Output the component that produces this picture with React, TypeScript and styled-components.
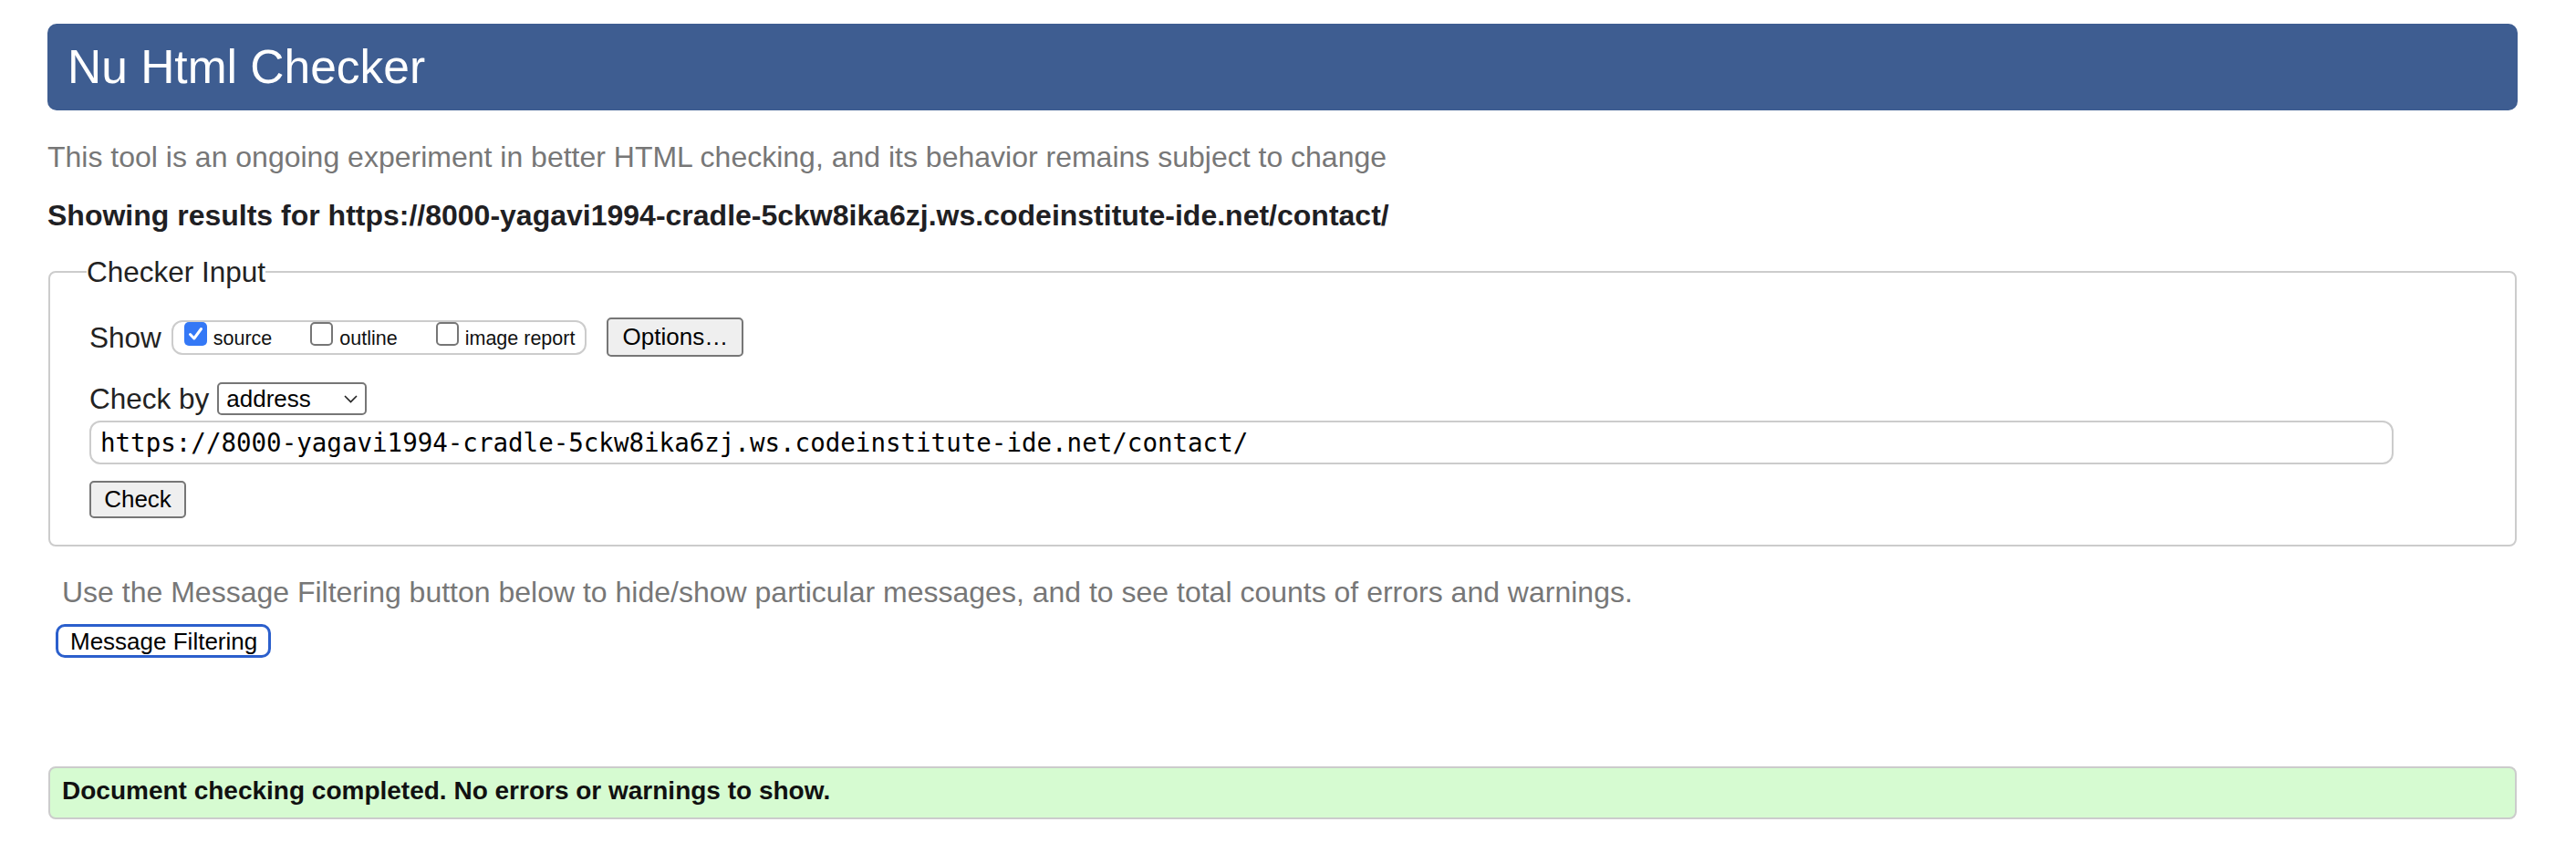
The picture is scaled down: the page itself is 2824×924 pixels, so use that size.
import React from "react";
import styled, { createGlobalStyle } from "styled-components";

const GlobalStyle = createGlobalStyle`
  html, body {
    margin: 0;
    padding: 0;
    background: #ffffff;
  }
  body {
    font-family: "Liberation Sans", Arial, Helvetica, sans-serif;
    color: #222222;
  }
`;

const Page = styled.div`
  width: 2708px;
  margin-left: 52px;
  padding-top: 26px;
  display: flex;
  flex-direction: column;
`;

const Header = styled.h1`
  margin: 0;
  height: 95px;
  box-sizing: border-box;
  padding-left: 22px;
  display: flex;
  align-items: center;
  background: #3e5d91;
  border-radius: 10px;
  color: #ffffff;
  font-size: 51.5px;
  font-weight: 400;
  line-height: 1;
`;

const Intro = styled.p`
  margin: 33px 0 0 0;
  padding-left: 0;
  font-size: 32px;
  line-height: 37px;
  color: #777777;
`;

const ResultsFor = styled.p`
  margin: 27px 0 0 0;
  padding-left: 0;
  font-size: 32px;
  line-height: 37px;
  font-weight: 700;
  color: #1f2023;
`;

const Fieldset = styled.fieldset`
  margin: 25px 1px 0 1px;
  padding: 32px 40px 29px 43px;
  border: 2px solid #cccccc;
  border-radius: 8px;
  min-width: 0;
  display: flex;
  flex-direction: column;
  align-items: flex-start;
`;

const Legend = styled.legend`
  padding: 0;
  margin-left: -3px;
  font-size: 31.5px;
  line-height: 36px;
  color: #222222;
`;

const Row = styled.div<{ $top?: number }>`
  display: flex;
  align-items: center;
  margin-top: ${(p) => p.$top ?? 0}px;
`;

const Label = styled.span<{ $gap: number }>`
  font-size: 31.5px;
  line-height: 36px;
  color: #222222;
  margin-right: ${(p) => p.$gap}px;
`;

const ShowGroup = styled.div`
  height: 38px;
  box-sizing: border-box;
  border: 2px solid #cccccc;
  border-radius: 12px;
  padding: 0 11px 0 12px;
  display: flex;
  align-items: flex-start;
  gap: 42px;
`;

const CheckItem = styled.label`
  display: flex;
  align-items: flex-start;
`;

const Box = styled.span<{ $checked?: boolean }>`
  width: 25px;
  height: 26px;
  box-sizing: border-box;
  border-radius: 5px;
  display: flex;
  align-items: center;
  justify-content: center;
  background: ${(p) => (p.$checked ? "#3478f6" : "#ffffff")};
  border: ${(p) => (p.$checked ? "none" : "2px solid #767676")};
`;

const CheckText = styled.span`
  margin-left: 7px;
  margin-top: 6px;
  font-size: 21.5px;
  line-height: 24px;
  color: #111111;
`;

const Button = styled.button<{ $w: number; $h: number }>`
  width: ${(p) => p.$w}px;
  height: ${(p) => p.$h}px;
  box-sizing: border-box;
  padding: 0;
  background: #efefef;
  border: 2px solid #767676;
  border-radius: 5px;
  font-family: "Liberation Sans", Arial, sans-serif;
  font-size: 26px;
  color: #000000;
  display: flex;
  align-items: center;
  justify-content: center;
`;

const OptionsButton = styled(Button)`
  margin-left: 22px;
`;

const Select = styled.div`
  width: 164px;
  height: 36px;
  box-sizing: border-box;
  border: 2px solid #767676;
  border-radius: 5px;
  padding: 0 8px 0 8px;
  display: flex;
  align-items: center;
  justify-content: space-between;
  font-size: 26px;
  color: #000000;
  background: #ffffff;
`;

const UrlInput = styled.input`
  width: 2526px;
  height: 48px;
  box-sizing: border-box;
  border: 2px solid #cccccc;
  border-radius: 12px;
  padding: 0 10px;
  font-family: "DejaVu Sans Mono", "Liberation Mono", monospace;
  font-size: 27.5px;
  color: #000000;
  background: #ffffff;
  outline: none;
`;

const Message = styled.p`
  margin: 32px 0 0 0;
  padding-left: 16px;
  font-size: 32px;
  line-height: 37px;
  color: #777777;
`;

const FilterButton = styled.button`
  align-self: flex-start;
  margin: 16px 0 0 9px;
  height: 37px;
  box-sizing: border-box;
  padding: 0 12px 0 13px;
  background: #ffffff;
  border: 3px solid #2b5fcc;
  border-radius: 10px;
  font-family: "Liberation Sans", Arial, sans-serif;
  font-size: 26px;
  line-height: 30px;
  color: #000000;
`;

const SuccessBar = styled.div`
  margin: 119px 1px 0 1px;
  height: 58px;
  box-sizing: border-box;
  padding: 9px 12px 0 13px;
  background: #d6fbd1;
  border: 2px solid #cccccc;
  border-radius: 8px;
  font-size: 28px;
  line-height: 32px;
  font-weight: 700;
  color: #111111;
`;

const CheckMark = () => (
  <svg width="17" height="16" viewBox="0 0 17 16">
    <path d="M2.5 8.5 L6.8 13 L14.5 2.5" fill="none" stroke="#ffffff" strokeWidth="3" strokeLinecap="round" strokeLinejoin="round" />
  </svg>
);

const Chevron = () => (
  <svg width="15" height="9" viewBox="0 0 15 9">
    <path d="M1 1 L7.5 7.5 L14 1" fill="none" stroke="#222222" strokeWidth="1.6" />
  </svg>
);

const url = "https://8000-yagavi1994-cradle-5ckw8ika6zj.ws.codeinstitute-ide.net/contact/";

const options = [
  { name: "source", checked: true },
  { name: "outline", checked: false },
  { name: "image report", checked: false },
];

export default function App() {
  return (
    <>
      <GlobalStyle />
      <Page>
        <Header>Nu Html Checker</Header>
        <Intro>
          This tool is an ongoing experiment in better HTML checking, and its behavior remains subject to change
        </Intro>
        <ResultsFor>Showing results for {url}</ResultsFor>
        <Fieldset>
          <Legend>Checker Input</Legend>
          <Row>
            <Label $gap={11}>Show</Label>
            <ShowGroup>
              {options.map((o) => (
                <CheckItem key={o.name}>
                  <Box $checked={o.checked}>{o.checked && <CheckMark />}</Box>
                  <CheckText>{o.name}</CheckText>
                </CheckItem>
              ))}
            </ShowGroup>
            <OptionsButton $w={150} $h={43}>Options…</OptionsButton>
          </Row>
          <Row $top={28}>
            <Label $gap={9}>Check by</Label>
            <Select>
              <span>address</span>
              <Chevron />
            </Select>
          </Row>
          <Row $top={6}>
            <UrlInput readOnly value={url} />
          </Row>
          <Row $top={18}>
            <Button $w={106} $h={41}>Check</Button>
          </Row>
        </Fieldset>
        <Message>
          Use the Message Filtering button below to hide/show particular messages, and to see total counts of errors and warnings.
        </Message>
        <FilterButton>Message Filtering</FilterButton>
        <SuccessBar>Document checking completed. No errors or warnings to show.</SuccessBar>
      </Page>
    </>
  );
}
